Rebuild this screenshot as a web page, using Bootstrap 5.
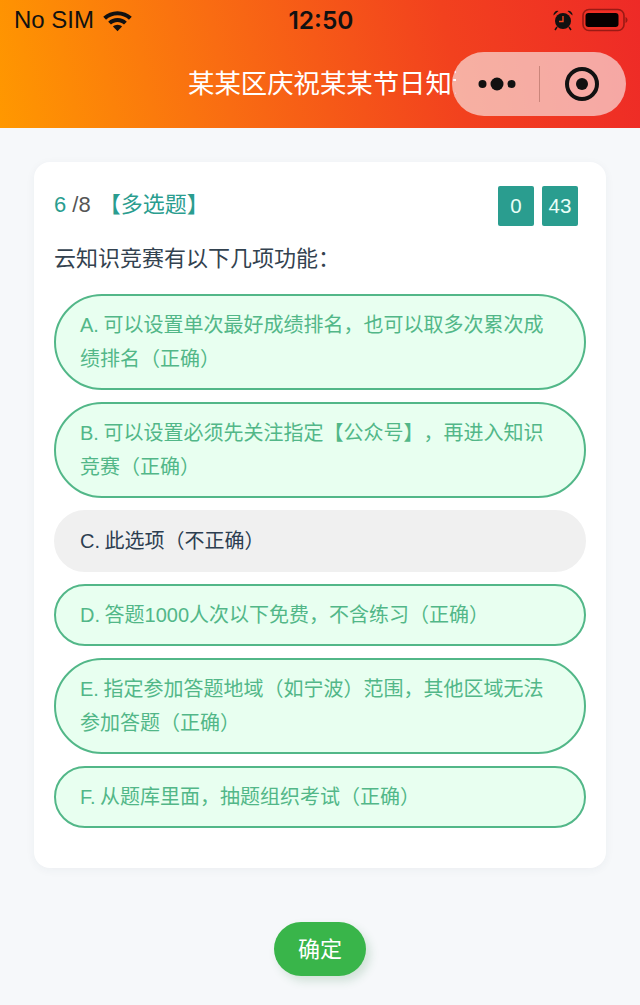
<!DOCTYPE html>
<html lang="zh">
<head>
<meta charset="utf-8">
<link href="https://cdn.jsdelivr.net/npm/bootstrap@5.3.0/dist/css/bootstrap.min.css" rel="stylesheet">
<style>
html,body{height:100%;}
body{background:#f6f8fa;font-family:"Liberation Sans","Noto Sans CJK SC",sans-serif;color:#2c3e50;overflow:hidden;text-spacing-trim:space-all;}
.head-bar{height:128px;background:linear-gradient(78deg,#ff9800 0%,#f96c12 35%,#f2411e 70%,#ee2a27 100%);position:relative;overflow:hidden;}
.status-row{height:40px;padding:0 12px 0 14px;color:#111;font-size:24px;}
.status-time{font-family:Inter,"Liberation Sans",sans-serif;font-weight:600;font-size:24.500px;}
.status-side{width:200px;}
.wifi-gap{column-gap:8px;}
.title-row{height:88px;padding:27px 0 0 188px;font-size:26.400px;color:#fff;line-height:34px;}
.title-clip{display:block;width:268px;overflow:hidden;white-space:nowrap;}
.capsule{position:absolute;left:452px;top:52px;width:174px;height:64px;border-radius:32px;background:rgba(250,250,250,.6);}
.capsule-part{width:87px;height:100%;}
.capsule-dots{padding-left:4px;}
.capsule-line{width:1px;height:36px;background:rgba(120,60,50,.35);}
.quiz-card{margin:34px 34px 0;width:572px;height:706px;background:#fff;border-radius:16px;padding:24px 20px 0;box-shadow:0 2px 10px rgba(40,50,70,.05);}
.q-head{height:40px;font-size:22px;color:#555;}
.q-label{margin-top:-4px;}
.q-num{color:#2a9d8f;}
.q-type{color:#2a9d8f;margin-left:2px;}
.time-box{width:36px;height:40px;background:#2a9d8f;color:#e8fff8;border-radius:2px;font-size:20.500px;}
.time-wrap{margin-right:8px;}
.q-text{font-size:22px;line-height:32px;margin:17px 0 19px;color:#33424f;}
.opt-list{row-gap:12px;}
.opt-item{border:2px solid #52b788;background:#e8fff0;color:#52b788;border-radius:48px;padding:12px 24px;font-size:20px;line-height:34px;word-spacing:-1px;}
.opt-plain{border-color:#f0f0f0;background:#f0f0f0;color:#2c3e50;}
.ok-btn{width:92px;height:54px;margin:54px auto 0;background:#39b54a;color:#fff;border-radius:27px;font-size:22px;box-shadow:4px 5px 10px rgba(40,120,60,.18);}
</style>
</head>
<body>
<div class="head-bar">
  <div class="status-row d-flex align-items-center justify-content-between">
    <div class="status-side d-flex align-items-center wifi-gap">
      <span>No SIM</span>
      <svg width="31" height="23" viewBox="0 0 30 22" fill="#111"><path d="M15 2C9.6 2 4.8 4 1.2 7.4l2.7 2.8C6.8 7.4 10.7 5.8 15 5.8s8.200 1.600 11.100 4.400l2.700-2.800C25.200 4 20.400 2 15 2z"/><path d="M15 8.600c-3.500 0-6.600 1.300-9 3.500l2.700 2.800c1.700-1.500 3.900-2.500 6.300-2.500s4.600 1 6.300 2.500l2.700-2.800c-2.400-2.200-5.500-3.500-9-3.500z"/><path d="M15 15c-1.700 0-3.300.7-4.400 1.800L15 21.400l4.400-4.600C18.300 15.700 16.700 15 15 15z"/></svg>
    </div>
    <span class="status-time">12:50</span>
    <div class="status-side d-flex align-items-center justify-content-end gap-2">
      <svg width="22" height="22" viewBox="0 0 22 22" fill="#111"><circle cx="11" cy="12" r="8"/><path d="M1.500 6.500A4 4 0 0 1 6.500 2zM20.500 6.500A4 4 0 0 0 15.500 2z"/><path d="M11 7v5.500H7" stroke="#f4451d" stroke-width="1.400" fill="none"/><path d="M5 18l-2 3M17 18l2 3" stroke="#111" stroke-width="1.500"/></svg>
      <svg width="46" height="24" viewBox="0 0 46 24"><rect x="1" y="1.500" width="41" height="21" rx="6" fill="none" stroke="#9a1a14" stroke-width="1.600"/><rect x="3.500" y="5" width="33" height="14" rx="3" fill="#050000"/><path d="M43.500 9v6c1.200-.5 2-1.700 2-3s-.8-2.500-2-3z" fill="#9a1a14"/></svg>
    </div>
  </div>
  <div class="title-row"><span class="title-clip">某某区庆祝某某节日知识竞赛</span></div>
  <div class="capsule d-flex align-items-center">
    <div class="capsule-part capsule-dots d-flex align-items-center justify-content-center">
      <svg width="40" height="16" viewBox="0 0 40 16" fill="#111"><circle cx="5.500" cy="8" r="4"/><circle cx="20" cy="8" r="6.500"/><circle cx="34.500" cy="8" r="4"/></svg>
    </div>
    <div class="capsule-line"></div>
    <div class="capsule-part d-flex align-items-center justify-content-center">
      <svg width="36" height="36" viewBox="0 0 36 36"><circle cx="17" cy="18" r="15" fill="none" stroke="#111" stroke-width="4"/><circle cx="17" cy="18" r="6" fill="#111"/></svg>
    </div>
  </div>
</div>
<div class="quiz-card">
  <div class="q-head d-flex align-items-center justify-content-between">
    <div class="q-label"><span class="q-num">6</span> /8 <span class="q-type">【多选题】</span></div>
    <div class="d-flex gap-2 time-wrap">
      <div class="time-box d-flex align-items-center justify-content-center">0</div>
      <div class="time-box d-flex align-items-center justify-content-center">43</div>
    </div>
  </div>
  <div class="q-text">云知识竞赛有以下几项功能：</div>
  <div class="d-flex flex-column opt-list">
    <div class="opt-item">A. 可以设置单次最好成绩排名，也可以取多次累次成绩排名（正确）</div>
    <div class="opt-item">B. 可以设置必须先关注指定【公众号】，再进入知识竞赛（正确）</div>
    <div class="opt-item opt-plain">C. 此选项（不正确）</div>
    <div class="opt-item">D. 答题1000人次以下免费，不含练习（正确）</div>
    <div class="opt-item">E. 指定参加答题地域（如宁波）范围，其他区域无法参加答题（正确）</div>
    <div class="opt-item">F. 从题库里面，抽题组织考试（正确）</div>
  </div>
</div>
<div class="ok-btn d-flex align-items-center justify-content-center">确定</div>
</body>
</html>
